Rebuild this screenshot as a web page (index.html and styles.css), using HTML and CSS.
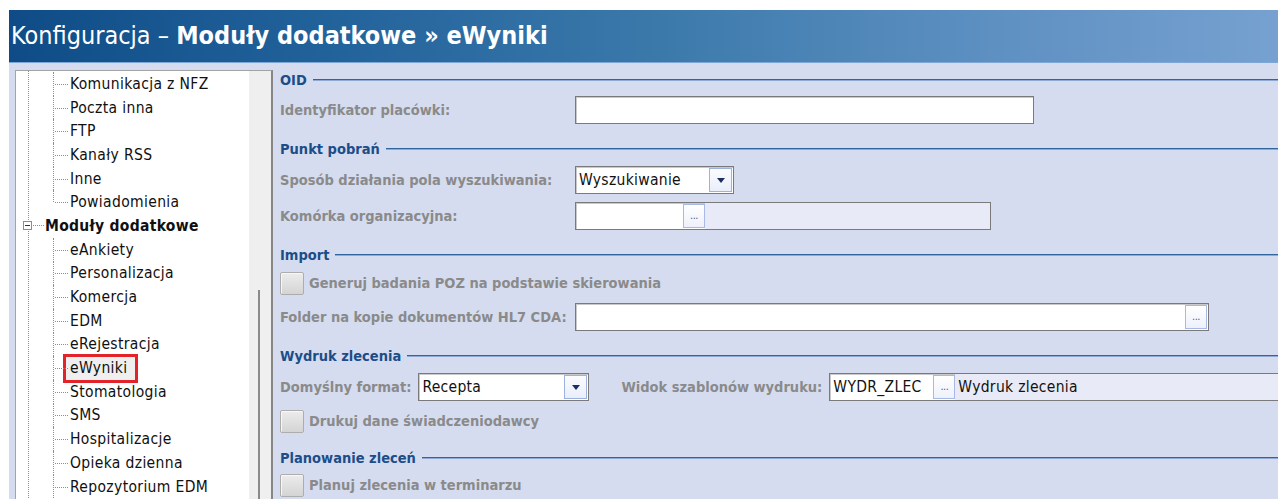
FILE: index.html
```html
<!DOCTYPE html>
<html lang="pl">
<head>
<meta charset="utf-8">
<title>Konfiguracja – Moduły dodatkowe » eWyniki</title>
<link rel="stylesheet" href="styles.css">
</head>
<body>
<div class="window">
  <header class="titlebar">
    <h1><span class="thin">Konfiguracja – </span>Moduły dodatkowe » eWyniki</h1>
  </header>
  <div class="workspace">
    <aside class="tree">
      <ul class="tree-list">
        <li class="node child"><span class="text">Komunikacja z NFZ</span></li>
        <li class="node child"><span class="text">Poczta inna</span></li>
        <li class="node child"><span class="text">FTP</span></li>
        <li class="node child"><span class="text">Kanały RSS</span></li>
        <li class="node child"><span class="text">Inne</span></li>
        <li class="node child last"><span class="text">Powiadomienia</span></li>
        <li class="node group"><span class="toggle"></span><span class="text">Moduły dodatkowe</span></li>
        <li class="node child"><span class="text">eAnkiety</span></li>
        <li class="node child"><span class="text">Personalizacja</span></li>
        <li class="node child"><span class="text">Komercja</span></li>
        <li class="node child"><span class="text">EDM</span></li>
        <li class="node child"><span class="text">eRejestracja</span></li>
        <li class="node child selected"><span class="text">eWyniki</span></li>
        <li class="node child"><span class="text">Stomatologia</span></li>
        <li class="node child"><span class="text">SMS</span></li>
        <li class="node child"><span class="text">Hospitalizacje</span></li>
        <li class="node child"><span class="text">Opieka dzienna</span></li>
        <li class="node child"><span class="text">Repozytorium EDM</span></li>
      </ul>
      <div class="scroll"><div class="thumb"></div></div>
    </aside>

    <main class="form">
      <div class="sec sec-first">OID</div>
      <div class="row gap6">
        <label class="label">Identyfikator placówki:</label>
        <div class="field w-oid"></div>
      </div>

      <div class="sec">Punkt pobrań</div>
      <div class="row gap7">
        <label class="label">Sposób działania pola wyszukiwania:</label>
        <div class="field combo w-search">
          <span class="value">Wyszukiwanie</span>
          <span class="drop"><span class="arrow"></span></span>
        </div>
      </div>
      <div class="row gap8">
        <label class="label">Komórka organizacyjna:</label>
        <div class="field lookup w-unit">
          <span class="code"></span>
          <span class="dots">...</span>
          <span class="desc"></span>
        </div>
      </div>

      <div class="sec">Import</div>
      <div class="row check-row gap6">
        <span class="check"></span>
        <span class="check-label">Generuj badania POZ na podstawie skierowania</span>
      </div>
      <div class="row gap8">
        <label class="label">Folder na kopie dokumentów HL7 CDA:</label>
        <div class="field path w-folder">
          <span class="value"></span>
          <span class="dots">...</span>
        </div>
      </div>

      <div class="sec">Wydruk zlecenia</div>
      <div class="row gap7">
        <label class="label label-auto">Domyślny format:</label>
        <div class="field combo w-format">
          <span class="value">Recepta</span>
          <span class="drop"><span class="arrow"></span></span>
        </div>
        <label class="label label-auto label-tpl">Widok szablonów wydruku:</label>
        <div class="field lookup w-tpl">
          <span class="code">WYDR_ZLEC</span>
          <span class="dots">...</span>
          <span class="desc">Wydruk zlecenia</span>
        </div>
      </div>
      <div class="row check-row gap8">
        <span class="check"></span>
        <span class="check-label">Drukuj dane świadczeniodawcy</span>
      </div>

      <div class="sec">Planowanie zleceń</div>
      <div class="row check-row gap5">
        <span class="check"></span>
        <span class="check-label">Planuj zlecenia w terminarzu</span>
      </div>
    </main>
  </div>
</div>
</body>
</html>
```

FILE: styles.css
```css
* { box-sizing: border-box; }

html, body {
  margin: 0;
  height: 100%;
  overflow: hidden;
  background: #ffffff;
}

body {
  padding: 10px 0 0 9px;
  font-family: "DejaVu Sans Condensed", "DejaVu Sans", sans-serif;
  font-stretch: condensed;
  font-size: 15px;
  color: #000;
}

.window {
  height: 700px;
  background: #d5dcef;
}

/* ---- title bar ---- */
.titlebar {
  height: 53px;
  display: flex;
  align-items: center;
  padding-left: 2px;
  background: linear-gradient(90deg, #0f4c87 0%, #22629b 25%, #3a78aa 50%, #5b8ec0 75%, #76a1d0 100%);
  border-bottom: 1px solid #7ea6d6;
}

.titlebar h1 {
  margin: 0;
  font-size: 25px;
  font-weight: bold;
  color: #ffffff;
  padding-bottom: 1px;
}

.titlebar .thin { font-weight: normal; }

/* ---- workspace ---- */
.workspace {
  display: flex;
  padding: 7px 0 0 6px;
  height: 640px;
}

/* ---- tree ---- */
.tree {
  width: 258px;
  flex: none;
  display: flex;
  border-left: 1px solid #a3a3a3;
  border-top: 1px solid #a3a3a3;
  border-right: 2px solid #868686;
}

.tree-list {
  list-style: none;
  margin: 0;
  padding: 1px 0 0 0;
  width: 233px;
  font-size: 15.5px;
  letter-spacing: 0.35px;
  color: #101010;
  background-color: #ffffff;
  /* root level guide line */
  background-image: repeating-linear-gradient(to bottom, #8e8e8e 0 1px, transparent 1px 2px);
  background-size: 1px 100%;
  background-position: 12px 0;
  background-repeat: no-repeat;
}

.node {
  position: relative;
  height: 23.7px;
  display: flex;
  align-items: center;
  white-space: nowrap;
}

.child { padding-left: 54px; }

/* vertical guide of the child level */
.child::before {
  content: "";
  position: absolute;
  left: 37px;
  top: 0;
  bottom: 0;
  border-left: 1px dotted #8e8e8e;
}
.child.last::before { bottom: 50%; }

/* connector to the item */
.child::after {
  content: "";
  position: absolute;
  left: 39px;
  width: 13px;
  top: 50%;
  border-top: 1px dotted #8e8e8e;
}

.group {
  padding-left: 7px;
  font-weight: bold;
  letter-spacing: 0.3px;
}

.group .toggle {
  position: relative;
  width: 9px;
  height: 9px;
  border: 1px solid #8c8c8c;
  background: #ffffff;
  margin-right: 13px;
  flex: none;
}
.group .toggle::before {
  content: "";
  position: absolute;
  left: 1px;
  right: 1px;
  top: 3px;
  border-top: 1px solid #333;
}
.group .toggle::after {
  content: "";
  position: absolute;
  left: 9px;
  width: 11px;
  top: 3px;
  border-top: 1px dotted #8e8e8e;
}

.selected .text {
  display: inline-block;
  margin-left: -7px;
  padding: 0 8px 0 4px;
  height: 29px;
  line-height: 23px;
  border: 3px solid #e2232a;
  background: #efefef;
}

.scroll {
  width: 22px;
  flex: none;
  background: #efefef;
  padding: 219px 0 0 9px;
}

.thumb {
  width: 2px;
  height: 100%;
  background: #8a8a8a;
}

/* ---- form ---- */
.form {
  flex: 1;
  min-width: 0;
  padding-left: 7px;
  font-weight: bold;
}

.sec {
  display: flex;
  align-items: center;
  height: 20px;
  margin-top: 15px;
  color: #1c4d88;
  font-size: 14.5px;
}
.sec-first { margin-top: 0; }

.sec::after {
  content: "";
  flex: 1;
  margin-left: 6px;
  margin-top: -1px;
  border-top: 1px solid #3066a0;
  border-bottom: 1px solid #8eaad4;
}

.row {
  display: flex;
  align-items: center;
  height: 28px;
}
.gap5 { margin-top: 5px; }
.gap6 { margin-top: 6px; }
.gap7 { margin-top: 7px; }
.gap8 { margin-top: 8px; }

.label {
  width: 295px;
  flex: none;
  color: #8a8a8a;
  font-size: 14.5px;
}
.label-auto { width: auto; margin-right: 7px; }
.label-tpl { margin-left: 32px; }

.field {
  height: 28px;
  flex: none;
  display: flex;
  align-items: stretch;
  background: #ffffff;
  border: 1px solid #7a7a7a;
  box-shadow: inset 1px 1px 0 #c9c9c9;
  font-weight: normal;
  font-size: 15.5px;
  letter-spacing: 0.3px;
  color: #111;
}

.field .value {
  flex: 1;
  display: flex;
  align-items: center;
  padding-left: 3px;
}

.w-oid { width: 459px; }
.w-search { width: 159px; }
.w-unit { width: 416px; }
.w-folder { width: 634px; }
.w-format { width: 171px; }
.w-tpl { width: 460px; }

.drop {
  width: 23px;
  flex: none;
  margin: 1px 1px 1px 0;
  background: linear-gradient(#fbfcff, #e9eefa);
  border: 1px solid #9fb2de;
  display: flex;
  align-items: center;
  justify-content: center;
}
.arrow {
  width: 0;
  height: 0;
  border-left: 4.5px solid transparent;
  border-right: 4.5px solid transparent;
  border-top: 5px solid #1d2e64;
}

.dots {
  width: 22px;
  flex: none;
  margin: 1px 0;
  background: linear-gradient(#ffffff, #eef1fb);
  border: 1px solid #a9b9e5;
  color: #4f5f8a;
  font-size: 11px;
  line-height: 1;
  display: flex;
  align-items: flex-end;
  justify-content: center;
  padding-bottom: 6px;
  letter-spacing: -0.5px;
}

.lookup .code {
  width: 107px;
  flex: none;
  display: flex;
  align-items: center;
  padding-left: 3px;
}
.lookup .desc {
  flex: 1;
  display: flex;
  align-items: center;
  padding-left: 3px;
  background: #e8ebf7;
}
.w-tpl .code { width: 103px; }

.path .dots { margin-right: 1px; }

.check-row { height: 24px; }

.check {
  width: 24px;
  height: 23px;
  flex: none;
  border: 1px solid #adadad;
  border-radius: 2px;
  background: linear-gradient(#ececec, #d4d4d4);
  box-shadow: inset 1px 1px 0 #f7f7f7;
}

.check-label {
  margin-left: 5px;
  color: #8a8a8a;
  font-size: 14.5px;
}
```
